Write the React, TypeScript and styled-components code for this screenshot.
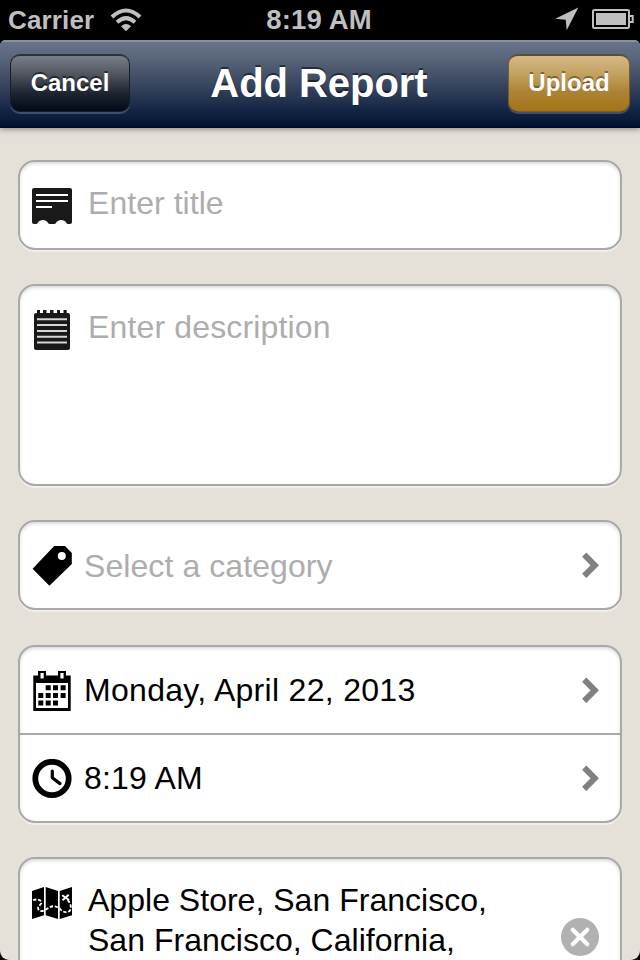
import React from "react";
import styled, { createGlobalStyle } from "styled-components";

const GlobalStyle = createGlobalStyle`
  html, body { margin: 0; background: #000; }
  * { box-sizing: border-box; }
  body { font-family: "Liberation Sans", Arial, Helvetica, sans-serif; }
`;

const Screen = styled.div`
  width: 640px;
  height: 960px;
  overflow: hidden;
  background: #000;
  display: flex;
  flex-direction: column;
`;

const StatusBar = styled.div`
  height: 40px;
  flex: none;
  display: grid;
  grid-template-columns: 1fr auto 1fr;
  align-items: center;
  padding: 0 6px 0 8px;
  color: #bfbfbf;
  font-size: 26px;
  line-height: 40px;
  font-weight: bold;
`;

const StatusGroup = styled.div<{ $end?: boolean }>`
  display: flex;
  align-items: center;
  justify-content: ${(p) => (p.$end ? "flex-end" : "flex-start")};
  gap: ${(p) => (p.$end ? "13px" : "16px")};
`;

const Carrier = styled.span`
  letter-spacing: 0.15px;
`;

const Clock = styled.div`
  font-size: 27.5px;
  letter-spacing: 0.15px;
  padding-right: 4px;
`;

const AppWindow = styled.div`
  flex: 1;
  min-height: 0;
  display: flex;
  flex-direction: column;
  overflow: hidden;
  border-radius: 6px 6px 9px 9px;
  background: #e5e1d9;
`;

const NavBar = styled.header`
  height: 88px;
  flex: none;
  display: grid;
  grid-template-columns: 120px 1fr 122px;
  align-items: start;
  padding: 14px 10px 0;
  background: linear-gradient(#68758a 0%, #5a667b 20%, #39465f 50%, #142544 80%, #021434 97%);
  box-shadow: inset 0 2px 0 #8792a3, inset 0 -2px 0 #010c26, 0 1px 6px rgba(70, 60, 40, 0.6);
`;

const NavTitle = styled.h1`
  margin: 0;
  text-align: center;
  color: #fff;
  font-size: 40px;
  line-height: 58px;
  letter-spacing: -0.05px;
  text-shadow: 0 -2px 0 rgba(0, 0, 0, 0.5);
`;

const NavButton = styled.button<{ $gold?: boolean }>`
  width: ${(p) => (p.$gold ? 122 : 120)}px;
  height: 58px;
  padding: 0 0 2px;
  border: 1px solid ${(p) => (p.$gold ? "#7d5c20" : "#171d29")};
  border-top: 2px solid ${(p) => (p.$gold ? "#5d4d34" : "#2c323d")};
  border-radius: 10px;
  background: ${(p) =>
    p.$gold
      ? "linear-gradient(#d3ba88 0%, #c1a05c 35%, #ae8236 65%, #a37517 100%)"
      : "linear-gradient(#7a7e87 0%, #51555f 33%, #1c2430 68%, #020a17 100%)"};
  box-shadow: 0 2px 0 rgba(116, 135, 165, 0.45);
  color: #fff;
  font: bold 24px/53px "Liberation Sans", Arial, sans-serif;
  text-shadow: 0 -2px 0 ${(p) => (p.$gold ? "rgba(65, 45, 10, 0.5)" : "rgba(0, 0, 0, 0.5)")};
`;

const Form = styled.main`
  display: flex;
  flex-direction: column;
  padding: 32px 18px 0;
`;

const Card = styled.section<{ $height: number; $after?: number }>`
  height: ${(p) => p.$height}px;
  flex: none;
  margin-bottom: ${(p) => p.$after ?? 35}px;
  border: 2px solid #a9a9a9;
  border-radius: 17px;
  background: #fff;
  box-shadow: inset 0 2px 4px -1px rgba(0, 0, 0, 0.2), 0 2px 1px rgba(255, 255, 255, 0.5);
`;

const Row = styled.div<{ $divided?: boolean; $top?: number; $gap?: number }>`
  display: flex;
  align-items: flex-start;
  gap: ${(p) => p.$gap ?? 12}px;
  height: ${(p) => (p.$divided ? 88 : 86)}px;
  padding: ${(p) => p.$top ?? 24}px 21px 0 12px;
  border-bottom: ${(p) => (p.$divided ? "2px solid #a9a9a9" : "none")};
`;

const Label = styled.div<{ $muted?: boolean; $spacing?: number; $shift?: number }>`
  flex: 1;
  margin-top: ${(p) => p.$shift ?? 0}px;
  color: ${(p) => (p.$muted ? "#adadad" : "#000")};
  font-size: 32px;
  line-height: 40px;
  letter-spacing: ${(p) => p.$spacing ?? 0}px;
  white-space: pre-line;
`;

const Glyph = styled.svg<{ $drop?: number }>`
  display: block;
  flex: none;
  margin-top: ${(p) => p.$drop ?? 0}px;
`;

const WifiIcon = () => (
  <Glyph width="32" height="24" viewBox="0 0 32 24">
    <g fill="none" stroke="#bfbfbf" strokeWidth="4">
      <path d="M2 9Q16-4 30 9" />
      <path d="M7 14.3Q16 6 25 14.3" />
    </g>
    <path d="M11 18.3Q16 13.6 21 18.3L16 23.3Z" fill="#bfbfbf" />
  </Glyph>
);

const LocationIcon = () => (
  <Glyph width="24" height="24" viewBox="0 0 24 24" $drop={-2}>
    <path d="M23.3.6L11.7 23.2 10.7 12.7.3 11.7Z" fill="#bfbfbf" />
  </Glyph>
);

const BatteryIcon = () => (
  <Glyph width="42" height="20" viewBox="0 0 42 20" $drop={-2}>
    <rect x="1" y="1" width="36" height="18" rx="1.5" fill="none" stroke="#bfbfbf" strokeWidth="2" />
    <rect x="4" y="4" width="30" height="12" fill="#bfbfbf" />
    <path d="M38 7h2.7v6H38" fill="none" stroke="#bfbfbf" strokeWidth="2" />
  </Glyph>
);

const TicketIcon = () => (
  <Glyph width="40" height="36" viewBox="0 0 40 36" $drop={2}>
    <path
      d="M2 0H38Q40 0 40 2V34Q40 36 38 36H36.3Q34.8 36 34.3 34.7C32.4 31 26 31 24.1 34.7Q23.5 36 22 36H18Q16.5 36 15.9 34.7C14 31 8 31 5.8 34.7Q5.2 36 3.7 36H2Q0 36 0 34V2Q0 0 2 0Z"
      fill="#191919"
    />
    <path d="M4 7H36M4 13H36M4 19H20" stroke="#fff" strokeWidth="2" />
  </Glyph>
);

const NotepadIcon = () => (
  <Glyph width="40" height="40" viewBox="0 0 40 40">
    <path
      d="M5 0H8V3H11V0H14.5V3H18V0H21.5V3H25V0H28V3H31.5V0H34.7V3H36Q38 3 38 5V38Q38 40 36 40H4Q2 40 2 38V5Q2 3 5 3Z"
      fill="#191919"
    />
    <path d="M5 9.3H35M5 15.1H35M5 20.9H35M5 26.7H35M5 32.4H35" stroke="#d5d5d5" strokeWidth="2" />
  </Glyph>
);

const TagIcon = () => (
  <Glyph width="40" height="40" viewBox="0 0 40 40">
    <path
      fillRule="evenodd"
      d="M22.2 0H33L39.8 7V18L17.4 39.7.6 22.7ZM29.8 6A4 4 0 1 0 29.8 14A4 4 0 1 0 29.8 6Z"
    />
  </Glyph>
);

const CalendarIcon = () => (
  <Glyph width="40" height="40" viewBox="0 0 40 40">
    <path
      fillRule="evenodd"
      d="M1.3 4.5H6V0H14V4.5H26V0H34V4.5H38.7V40H1.3ZM8.5 2V7.5H11.7V2ZM28.4 2V7.5H31.6V2ZM4 12V37H36V12Z"
    />
    <path d="M13.7 14.3h5v5h-5zM21 14.3h5v5h-5zM28.6 14.3h5v5h-5zM6.3 22h5v5h-5zM13.7 22h5v5h-5zM21 22h5v5h-5zM28.6 22h5v5h-5zM6.3 29.6h5v5h-5zM13.7 29.6h5v5h-5zM21 29.6h5v5h-5z" />
  </Glyph>
);

const ClockIcon = () => (
  <Glyph width="40" height="40" viewBox="0 0 40 40">
    <circle cx="20" cy="19.5" r="16.7" fill="none" stroke="#000" strokeWidth="5.8" />
    <path d="M20.3 12V18.8L28 24.6" fill="none" stroke="#000" strokeWidth="3.2" strokeLinecap="round" strokeLinejoin="round" />
  </Glyph>
);

const MapIcon = () => (
  <Glyph width="40" height="32" viewBox="0 0 40 32" $drop={7}>
    <path d="M0 4L12 0V28.3L0 32ZM13.7 0L26 4V32L13.7 28.3ZM27.7 4L40 0V28.3L27.7 32Z" />
    <g fill="none" stroke="#fff" strokeWidth="1.8">
      <path d="M1 13C4 12.2 8.3 12 9.3 14.8C10.2 17.8 5 19 6.2 21.8C7.3 25.6 12 24 15.5 21.6C20.5 18 24 19 27.5 21.3C30.5 25.2 34 26.2 37.6 24C40 21 38.6 16 35.7 13" strokeDasharray="3.4 1.7" />
      <path d="M30.2 8.2L37 13M36.7 7.7L30.5 13.3" strokeWidth="2" />
    </g>
  </Glyph>
);

const Chevron = () => (
  <Glyph width="18" height="26" viewBox="0 0 18 26" $drop={6}>
    <path d="M3.2 2.7L13.8 13.3 3.2 23.9" fill="none" stroke="#808080" strokeWidth="6" />
  </Glyph>
);

const ClearButton = styled.button`
  width: 38px;
  height: 38px;
  flex: none;
  margin-top: 38px;
  padding: 0;
  border: 0;
  border-radius: 50%;
  background: #b1b1b1;
`;

const ClearIcon = () => (
  <Glyph width="38" height="38" viewBox="0 0 38 38">
    <path d="M11.7 11.7L26.3 26.3M26.3 11.7L11.7 26.3" stroke="#fff" strokeWidth="4.2" strokeLinecap="round" />
  </Glyph>
);

export default function App() {
  return (
    <>
      <GlobalStyle />
      <Screen>
        <StatusBar>
          <StatusGroup>
            <Carrier>Carrier</Carrier>
            <WifiIcon />
          </StatusGroup>
          <Clock>8:19 AM</Clock>
          <StatusGroup $end>
            <LocationIcon />
            <BatteryIcon />
          </StatusGroup>
        </StatusBar>
        <AppWindow>
          <NavBar>
            <NavButton>Cancel</NavButton>
            <NavTitle>Add Report</NavTitle>
            <NavButton $gold>Upload</NavButton>
          </NavBar>
          <Form>
            <Card $height={90} $after={34}>
              <Row $gap={16}>
                <TicketIcon />
                <Label $muted $shift={-3} $spacing={0.05}>Enter title</Label>
              </Row>
            </Card>
            <Card $height={202} $after={34}>
              <Row $gap={16}>
                <NotepadIcon />
                <Label $muted $shift={-3} $spacing={0.15}>Enter description</Label>
              </Row>
            </Card>
            <Card $height={90}>
              <Row>
                <TagIcon />
                <Label $muted $spacing={0.08}>Select a category</Label>
                <Chevron />
              </Row>
            </Card>
            <Card $height={178} $after={34}>
              <Row $divided>
                <CalendarIcon />
                <Label $shift={-1} $spacing={0.3}>Monday, April 22, 2013</Label>
                <Chevron />
              </Row>
              <Row>
                <ClockIcon />
                <Label $shift={-1} $spacing={0.2}>8:19 AM</Label>
                <Chevron />
              </Row>
            </Card>
            <Card $height={220}>
              <Row $gap={16} $top={21}>
                <MapIcon />
                <Label $spacing={0.02}>{"Apple Store, San Francisco,\nSan Francisco, California,"}</Label>
                <ClearButton aria-label="Clear location">
                  <ClearIcon />
                </ClearButton>
              </Row>
            </Card>
          </Form>
        </AppWindow>
      </Screen>
    </>
  );
}
